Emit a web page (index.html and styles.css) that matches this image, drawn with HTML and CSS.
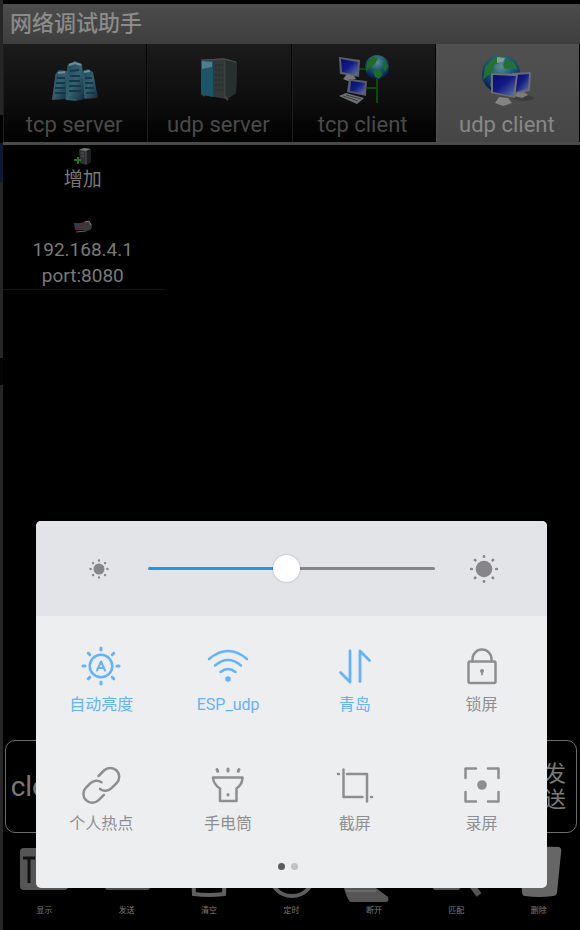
FILE: index.html
```html
<!DOCTYPE html>
<html lang="zh-CN">
<head>
  <meta charset="UTF-8">
  <meta name="viewport" content="width=device-width, initial-scale=1.0">
  <title>网络调试助手</title>
  <link rel="stylesheet" href="styles.css">
</head>
<body>
  <div class="edge"></div>
  <div class="app">
    <h1 class="title-bar">网络调试助手</h1>

    <!-- tabs -->
    <nav class="tabs">
      <button class="tab">
        <svg width="52" height="52" viewBox="0 0 52 52">
          <defs>
            <linearGradient id="steel" x1="0" y1="0" x2="1" y2="1">
              <stop offset="0" stop-color="#1c4a5b"/>
              <stop offset="0.5" stop-color="#35606e"/>
              <stop offset="1" stop-color="#142a3c"/>
            </linearGradient>
            <linearGradient id="screen" x1="0" y1="0" x2="1" y2="1">
              <stop offset="0" stop-color="#080b72"/>
              <stop offset="0.45" stop-color="#111b83"/>
              <stop offset="1" stop-color="#6575a0"/>
            </linearGradient>
            <radialGradient id="globe" cx="0.5" cy="0.3" r="0.7">
              <stop offset="0" stop-color="#5c8b91"/>
              <stop offset="0.5" stop-color="#17566e"/>
              <stop offset="1" stop-color="#06145c"/>
            </radialGradient>
          </defs>
          <path d="M8 18l3-3 8 1v28l-15 1z" fill="url(#steel)"/>
          <path d="M34 16l6-2 5 3 5 26-15 1z" fill="url(#steel)"/>
          <path d="M20 9l7-3 7 3 3 35-9 2-10-1z" fill="url(#steel)"/>
          <path d="M21 10l6-2 6 2M10 18l7-1M36 17l6-1" fill="none" stroke="#748c93" stroke-width="2"/>
          <path d="M22 16l9-1M22 21h10M21 26h11M21 31h12M21 36h12M9 23h8M8 28h9M7 33h10M7 38h10M37 23h7M37 28h8M37 33h9M38 38h9" stroke="#15384a" stroke-width="2"/>
          <path d="M20 10l-2 34 10 1M8 19L5 43M35 17l2 26" fill="none" stroke="#32606f"/>
        </svg>
        <span>tcp server</span>
      </button>
      <button class="tab">
        <svg width="52" height="52" viewBox="0 0 52 52">
          <path d="M9 5l23-2 13 4-1 31-9 6-26-4z" fill="#343838"/>
          <path d="M33 5l12 2-1 31-11 5z" fill="#26302f"/>
          <path d="M9 5l12 1v36L9 39z" fill="#1a5668"/>
          <path d="M10 6l10 1v5l-10 2z" fill="#4f7d8b"/>
          <path d="M9 5l23-1 12 3" fill="none" stroke="#4a4f4f"/>
          <path d="M23 10h9M23 15h9M23 20h9M23 25h9M23 30h9M23 35h9" stroke="#242929" stroke-dasharray="2 1"/>
          <path d="M33 6v36" stroke="#414747"/>
          <path d="M33 42l3 3M10 39l3 2" stroke="#444" stroke-width="2"/>
        </svg>
        <span>udp server</span>
      </button>
      <button class="tab">
        <svg width="52" height="52" viewBox="0 0 52 52">
          <path d="M21 14h19v34M30 33h10" fill="none" stroke="#0b4a0a" stroke-width="2"/>
          <circle cx="40" cy="12" r="12" fill="url(#globe)"/>
          <path d="M30 7l6-5 5 1-3 6-6 4-3 4zM36 16l6-2 4 5-4 5-4-2zM47 5l4 6-3 6-2-6z" fill="#1d6c20"/>
          <path d="M2 2l21 3-1 17-19-3z" fill="#5c5f68"/>
          <path d="M4 4l17 3-1 13-15-3z" fill="url(#screen)"/>
          <path d="M10 19l7 2 2 3-8 2-5-2z" fill="#777"/>
          <path d="M12 24l18 2-1 15-19-4z" fill="#585d68"/>
          <path d="M14 26l14 2-1 11-14-3z" fill="url(#screen)"/>
          <path d="M2 41l7-3 18 5-7 6z" fill="#707374"/>
          <path d="M6 41l15 5M9 40l15 4" stroke="#363b42"/>
        </svg>
        <span>tcp client</span>
      </button>
      <button class="tab active">
        <svg width="52" height="52" viewBox="0 0 52 52">
          <circle cx="20" cy="19" r="19" fill="url(#globe)"/>
          <path d="M4 12l9-9 10-2-3 6-7 3-1 7-7 5-3 3zM25 4l8 3 4 8-6-2-7 1-2-4zM10 25l5 2-1 8-5-4z" fill="#247032"/>
          <path d="M16 2l8 1-2 4-6 1z" fill="#829e96"/>
          <ellipse cx="42" cy="43" rx="11" ry="3" fill="#3c3c3c"/>
          <path d="M31 18l19-1-1 19-17 3z" fill="#696a74"/>
          <path d="M34 20l14-1-1 15-12 3z" fill="url(#screen)"/>
          <path d="M36 38l7-1 4 3-6 3-8-2z" fill="#7c7c7c"/>
          <path d="M10 18l27 1-3 24-24-5z" fill="#6c6e78"/>
          <path d="M12 20l23 1-3 20-20-4z" fill="url(#screen)"/>
          <path d="M18 42l9 1 4 5-9 3-8-3z" fill="#858585"/>
        </svg>
        <span>udp client</span>
      </button>
    </nav>

    <!-- connections -->
    <main class="content">
      <ul class="hosts">
        <li class="host">
          <svg width="18" height="18" viewBox="0 0 18 18">
            <path d="M5 2l5-2 7 1v13l-5 3-6-2z" fill="#303134"/>
            <path d="M5 2l5-2 7 1-5 2z" fill="#777"/>
            <path d="M12 3l5-2v13l-5 3z" fill="#1d1e21"/>
            <path d="M12 3v13M7 5h3M7 8h3" stroke="#555"/>
            <path d="M0 12h7M4 9v7" stroke="#247613" stroke-width="2"/>
          </svg>
          <span>增加</span>
        </li>
        <li class="host">
          <svg width="18" height="18" viewBox="0 0 18 18">
            <circle cx="13" cy="8" r="5" fill="#3a3a3a"/>
            <path d="M11 4l4-1 2 4" fill="none" stroke="#777"/>
            <path d="M0 5h10v7H1z" fill="#174457"/>
            <path d="M2 7l3 4 5-7" fill="none" stroke="#7b1c1c" stroke-width="2"/>
            <path d="M2 14l10-1" stroke="#656565"/>
          </svg>
          <span>192.168.4.1<br>port:8080</span>
        </li>
      </ul>
    </main>

    <!-- message row -->
    <div class="message">
      <button class="close-btn">close</button>
      <input class="message-input" type="text" aria-label="消息">
      <button class="send-btn">发送</button>
    </div>

    <!-- bottom toolbar -->
    <footer class="toolbar">
      <button class="tool">
        <svg width="56" height="56" viewBox="0 0 56 56">
          <rect x="4" y="2" width="48" height="42" rx="4" fill="#555"/>
          <path d="M7 12h12M13 12v25M24 12l10 25M34 12L24 37M38 12h12M44 12v25" stroke="#111" stroke-width="3"/>
        </svg>
        <span>显示</span>
      </button>
      <button class="tool">
        <svg width="56" height="56" viewBox="0 0 56 56">
          <rect x="6" y="6" width="45" height="38" rx="3" fill="#4c4c4c"/>
        </svg>
        <span>发送</span>
      </button>
      <button class="tool">
        <svg width="56" height="56" viewBox="0 0 56 56">
          <path d="M11 10l2 38q15 2 30 0l2-38z" fill="none" stroke="#606060" stroke-width="4"/>
        </svg>
        <span>清空</span>
      </button>
      <button class="tool">
        <svg width="56" height="56" viewBox="0 0 56 56">
          <circle cx="29" cy="28" r="22" fill="none" stroke="#5c5c5c" stroke-width="4"/>
          <path d="M29 14v14h9" fill="none" stroke="#5c5c5c" stroke-width="3"/>
        </svg>
        <span>定时</span>
      </button>
      <button class="tool">
        <svg width="56" height="56" viewBox="0 0 56 56">
          <path d="M-2 42h32l12 9q2 5-3 5H5q-3 0-7-14z" fill="#555"/>
          <path d="M0 45h30" stroke="#6a6a6a" stroke-width="2"/>
        </svg>
        <span>断开</span>
      </button>
      <button class="tool">
        <svg width="56" height="56" viewBox="0 0 56 56">
          <rect x="5" y="8" width="27" height="36" rx="2" fill="#555"/>
          <circle cx="34" cy="26" r="13" fill="none" stroke="#555" stroke-width="4"/>
          <path d="M43 38l8 11" stroke="#555" stroke-width="6"/>
        </svg>
        <span>匹配</span>
      </button>
      <button class="tool">
        <svg width="56" height="56" viewBox="0 0 56 56">
          <path d="M6 4q22-4 42-3 3 1 2 6l-4 40q-1 3-4 3-14 2-28 0-3 0-3-5z" fill="#666"/>
        </svg>
        <span>删除</span>
      </button>
    </footer>

    <!-- quick settings -->
    <section class="panel">
      <div class="brightness">
        <svg width="32" height="32" viewBox="0 0 32 32" fill="#868688">
          <circle cx="16" cy="16" r="5.5"/>
          <path d="M16 7.5v.2M16 24.3v.2M7.5 16h.2M24.3 16h.2M10 10l.1.1M22 10l.1.1M10 22l.1.1M22 22l.1.1" stroke="#868688" stroke-width="2.3" stroke-linecap="round"/>
        </svg>
        <input class="slider" type="range" min="0" max="100" value="48" aria-label="亮度">
        <svg width="32" height="32" viewBox="0 0 32 32" fill="#868688">
          <circle cx="16" cy="16" r="8.3"/>
          <path d="M16 3.2v.6M16 28.2v.6M3.2 16h.6M28.2 16h.6M6.9 6.9l.5.5M25.1 6.9l-.5.5M6.9 25.1l.5-.5M25.1 25.1l-.5-.5" stroke="#868688" stroke-width="2.6" stroke-linecap="round"/>
        </svg>
      </div>
      <div class="toggles">
        <button class="toggle on">
          <svg width="40" height="40" viewBox="0 0 40 40">
            <circle cx="20" cy="20" r="11.3"/>
            <path d="M20 2v2M20 36v2M2 20h2M36 20h2M7.2 7.2l1.6 1.6M32.8 7.2l-1.6 1.6M7.2 32.8l1.6-1.6M32.8 32.8l-1.6-1.6" stroke-width="3"/>
            <path d="M16 24.5l4-9 4 9M18 22h4" stroke-width="2"/>
          </svg>
          <span>自动亮度</span>
        </button>
        <button class="toggle on">
          <svg width="40" height="40" viewBox="0 0 40 40">
            <path d="M1 13q19-16 38 0M7 19.5q13-11 26 0M12.500 26q7.500-6 15 0"/>
            <circle cx="20" cy="33" r="2.800" fill="currentColor" stroke="none"/>
          </svg>
          <span>ESP_udp</span>
        </button>
        <button class="toggle on">
          <svg width="40" height="40" viewBox="0 0 40 40">
            <path d="M15 5v31L5.500 26.500M25 35.500V5l9.500 9.500" stroke-width="2.800"/>
          </svg>
          <span>青岛</span>
        </button>
        <button class="toggle">
          <svg width="40" height="40" viewBox="0 0 40 40">
            <rect x="6.500" y="15.500" width="27" height="21.500" rx="1.500"/>
            <path d="M10.500 15.500v-2.500a9.500 9.500 0 0 1 19 0v2.500"/>
            <circle cx="20" cy="25" r="2" fill="currentColor" stroke="none"/>
            <path d="M20 25v3.500" stroke-width="1.800"/>
          </svg>
          <span>锁屏</span>
        </button>
        <button class="toggle">
          <svg width="40" height="40" viewBox="0 0 40 40">
            <path d="M17.500 11l5.500-5.500a8.900 8.900 0 0 1 12.600 12.600l-5.100 5.100a8.600 8.600 0 0 1-11.500.7M20.500 17.200a8.600 8.600 0 0 0-11 1L5 22.600a8.900 8.900 0 0 0 12.600 12.600l5.300-5.400"/>
          </svg>
          <span>个人热点</span>
        </button>
        <button class="toggle">
          <svg width="40" height="40" viewBox="0 0 40 40">
            <path d="M5 12.500h29.500q0 7-6 11v12.500H12V23.500q-6.500-4-7-11z"/>
            <path d="M20 4v2M9 4.500l.8 1.800M31 4.500l-.8 1.800" stroke-width="3"/>
            <path d="M20 29.500v.5" stroke-width="3"/>
          </svg>
          <span>手电筒</span>
        </button>
        <button class="toggle">
          <svg width="40" height="40" viewBox="0 0 40 40">
            <path d="M3 9h1M12 9h20v18.500M8.500 4.500V32h19M36 32h1M32 27v9.500"/>
          </svg>
          <span>截屏</span>
        </button>
        <button class="toggle">
          <svg width="40" height="40" viewBox="0 0 40 40">
            <path d="M3.500 13V3.500h10.500M26 3.500h10.500V13M36.500 27v9.500H26M14 36.500H3.500V27"/>
            <circle cx="20" cy="20" r="4.800" fill="currentColor" stroke="none"/>
          </svg>
          <span>录屏</span>
        </button>
      </div>
      <div class="pages">
        <span class="dot current"></span>
        <span class="dot"></span>
      </div>
    </section>
  </div>
</body>
</html>
```

FILE: styles.css
```css
* {
  box-sizing: border-box;
}
body {
  margin: 0;
  min-height: 100vh;
  display: flex;
  background: #000;
  color: #7a7a7a;
  font-family: Roboto, "Noto Sans CJK SC", sans-serif;
}
button {
  margin: 0;
  padding: 0;
  border: none;
  background: none;
  color: inherit;
  font-family: inherit;
  cursor: pointer;
}
svg {
  display: block;
  flex-shrink: 0;
  overflow: visible;
}
.edge {
  width: 3px;
  background: linear-gradient(#262626 115px, #000 115px, #000 143px, #0b1a33 143px, #0b1a33 182px, #262626 182px, #262626 358px, #050505 358px, #050505 385px, #262626 385px);
}
.app {
  position: relative;
  flex: 1;
  display: flex;
  flex-direction: column;
  padding-top: 4px;
}
.title-bar {
  margin: 0;
  padding-left: 7px;
  height: 40px;
  line-height: 40px;
  font-size: 22px;
  font-weight: 500;
  color: #8b8b8b;
  background: linear-gradient(#4c4c4c, #3e3e3e);
}

/* tabs */
.tabs {
  display: grid;
  grid-template-columns: repeat(4, 1fr);
  border-bottom: 3px solid #4a4a4a;
}
.tab {
  display: flex;
  flex-direction: column;
  align-items: center;
  height: 98px;
  padding: 11px 2px 0 0;
  border-right: 1px solid #000;
  border-left: 1px solid #1c1c1c;
  background: linear-gradient(#1b1b1b, #0d0d0d 60%, #000);
  font-size: 22px;
  line-height: 36px;
  color: #4a4a4a;
}
.tab.active {
  background: linear-gradient(#505050, #464646);
  border-left-color: #505050;
  color: #888;
}

/* host list */
.content {
  flex: 1;
}
.hosts {
  width: 28%;
  margin: 0;
  padding: 3px 2px 0 0;
  list-style: none;
  display: flex;
  flex-direction: column;
  gap: 25px;
  border-bottom: 1px solid #151515;
}
.host {
  display: flex;
  flex-direction: column;
  align-items: center;
  gap: 1px;
  font-size: 19px;
  line-height: 26px;
  text-align: center;
}

/* message row */
.message {
  display: flex;
  height: 93px;
  margin: 0 3px 13px 2px;
  border: 1px solid #6c6c6c;
  border-radius: 10px;
}
.close-btn {
  width: 76px;
  font-size: 28px;
}
.message-input {
  flex: 1;
  min-width: 0;
  border: none;
  background: none;
  color: inherit;
  font-size: 20px;
}
.send-btn {
  width: 42px;
  padding: 0 10px;
  font-size: 22px;
  line-height: 26px;
}

/* bottom toolbar */
.toolbar {
  display: grid;
  grid-template-columns: repeat(7, 1fr);
  padding-bottom: 13px;
}
.tool {
  display: flex;
  flex-direction: column;
  align-items: center;
  gap: 3px;
  font-size: 8px;
  line-height: 12px;
}

/* quick settings panel, floats over the app */
.panel {
  position: absolute;
  left: 33px;
  right: 33px;
  bottom: 42px;
  overflow: hidden;
  border-radius: 5px;
  background: #edeef0;
  color: #8e8e90;
}
.brightness {
  display: flex;
  align-items: center;
  gap: 33px;
  height: 95px;
  padding: 0 47px;
  background: #e3e4e8;
}
.slider {
  flex: 1;
  min-width: 0;
  height: 28px;
  margin: 0;
  background: none;
  appearance: none;
  -webkit-appearance: none;
}
.slider::-webkit-slider-runnable-track {
  height: 3px;
  border-radius: 2px;
  background: linear-gradient(to right, #2196e8 48%, #868688 48%);
}
.slider::-webkit-slider-thumb {
  -webkit-appearance: none;
  width: 27px;
  height: 27px;
  margin-top: -12px;
  border-radius: 50%;
  background: #fff;
  box-shadow: 0 0 2px rgba(0, 0, 0, 0.3);
}
.toggles {
  display: grid;
  grid-template-columns: repeat(4, 1fr);
  row-gap: 49px;
  padding: 30px 2px 0;
}
.toggle {
  display: flex;
  flex-direction: column;
  align-items: center;
  gap: 8px;
  font-size: 16px;
  line-height: 22px;
}
.toggle svg {
  fill: none;
  stroke: currentColor;
  stroke-width: 2.5;
  stroke-linecap: round;
  stroke-linejoin: round;
}
.toggle span {
  height: 22px;
}
.toggle.on {
  color: #64b2f8;
}
.pages {
  display: flex;
  justify-content: center;
  gap: 6px;
  padding: 28px 7px 18px 0;
}
.dot {
  width: 7px;
  height: 7px;
  border-radius: 50%;
  background: #c0c1c3;
}
.dot.current {
  background: #5c5d5f;
}
```
